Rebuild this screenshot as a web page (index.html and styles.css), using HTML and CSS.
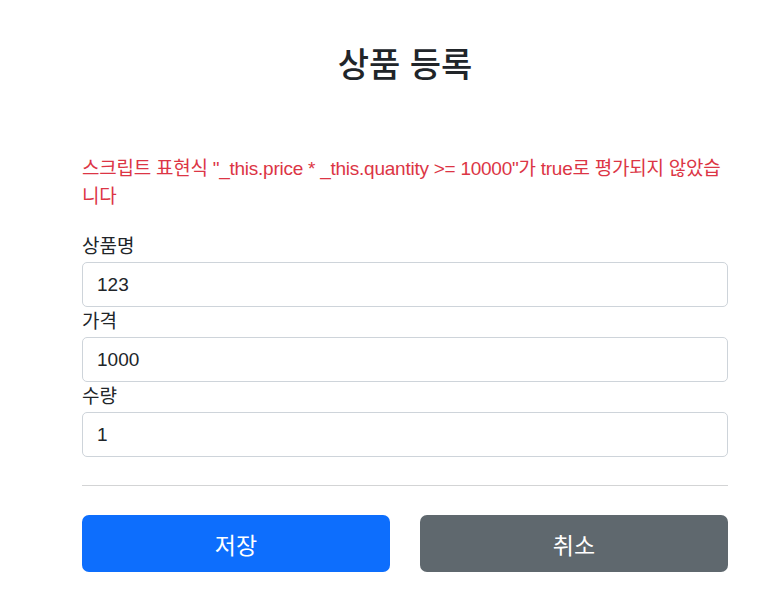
FILE: index.html
```html
<!DOCTYPE html>
<html lang="ko">
<head>
<meta charset="utf-8">
<title>상품 등록</title>
<link rel="stylesheet" href="styles.css">
</head>
<body>
<div class="container">
  <div class="header">
    <h2 class="title">상품 등록</h2>
  </div>
  <form class="form">
    <div class="global-error">스크립트 표현식 "_this.price * _this.quantity &gt;= 10000"가 true로 평가되지 않았습니다</div>
    <div class="field">
      <label class="label" for="itemName">상품명</label>
      <input class="control" id="itemName" type="text" value="123">
    </div>
    <div class="field">
      <label class="label" for="price">가격</label>
      <input class="control" id="price" type="text" value="1000">
    </div>
    <div class="field">
      <label class="label" for="quantity">수량</label>
      <input class="control" id="quantity" type="text" value="1">
    </div>
    <hr class="divider">
    <div class="actions">
      <button class="btn btn-primary" type="button">저장</button>
      <button class="btn btn-secondary" type="button">취소</button>
    </div>
  </form>
</div>
</body>
</html>
```
FILE: styles.css
```css
html, body {
  margin: 0;
  padding: 0;
  background: #ffffff;
}
body {
  font-family: "Liberation Sans", "Noto Sans CJK KR", sans-serif;
  color: #212529;
}
.container {
  width: 646px;
  margin-left: 82px;
  padding-top: 40px;
}
.header {
  display: flex;
  justify-content: center;
}
.title {
  margin: 0;
  font-size: 34px;
  line-height: 46px;
  font-weight: 500;
  font-family: "Noto Sans CJK KR", sans-serif;
}
.form {
  display: flex;
  flex-direction: column;
}
.global-error {
  margin-top: 69px;
  margin-bottom: 21px;
  color: #dc3545;
  font-size: 19px;
  line-height: 28px;
  letter-spacing: -0.25px;
}
.field {
  display: flex;
  flex-direction: column;
}
.label {
  font-size: 19px;
  line-height: 30px;
  height: 30px;
}
.control {
  box-sizing: border-box;
  height: 45px;
  width: 100%;
  margin: 0;
  padding: 0 14px;
  border: 1px solid #ced4da;
  border-radius: 5px;
  font-family: "Liberation Sans", "Noto Sans CJK KR", sans-serif;
  font-size: 19px;
  color: #212529;
  background: #fff;
}
.divider {
  margin: 28px 0 29px;
  border: 0;
  border-top: 1px solid #d3d4d5;
  height: 0;
}
.actions {
  display: grid;
  grid-template-columns: 1fr 1fr;
  column-gap: 30px;
}
.btn {
  height: 57px;
  border: 0;
  border-radius: 7px;
  font-family: "Liberation Sans", "Noto Sans CJK KR", sans-serif;
  font-size: 23px;
  color: #fff;
  padding: 0;
}
.btn-primary {
  background: #0d6efd;
}
.btn-secondary {
  background: #5f686e;
}
```
